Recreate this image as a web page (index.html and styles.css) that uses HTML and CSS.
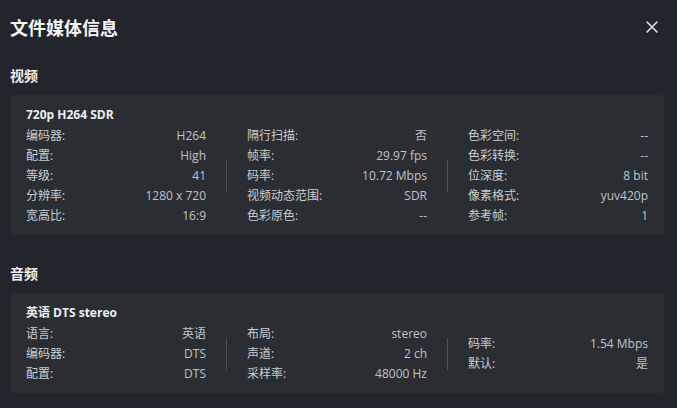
FILE: index.html
```html
<!DOCTYPE html>
<html lang="zh-CN">
<head>
  <meta charset="UTF-8">
  <meta name="viewport" content="width=device-width, initial-scale=1.0">
  <title>文件媒体信息</title>
  <link rel="stylesheet" href="styles.css">
</head>
<body>

  <div class="dialog">
    <div class="dialog-header">
      <span class="dialog-title">文件媒体信息</span>
      <button class="close-btn" aria-label="关闭">
        <svg width="12" height="12" viewBox="0 0 12 12">
          <path d="M1 1 L11 11 M11 1 L1 11" stroke="#dfe2e6" stroke-width="1.6" stroke-linecap="round"/>
        </svg>
      </button>
    </div>

    <!-- 视频 -->
    <div class="section-title">视频</div>
    <div class="card">
      <div class="card-title">720p H264 SDR</div>
      <div class="columns">
        <div class="col">
          <div class="row"><span>编码器:</span><span>H264</span></div>
          <div class="row"><span>配置:</span><span>High</span></div>
          <div class="row"><span>等级:</span><span>41</span></div>
          <div class="row"><span>分辨率:</span><span>1280 x 720</span></div>
          <div class="row"><span>宽高比:</span><span>16:9</span></div>
        </div>
        <div class="sep"></div>
        <div class="col">
          <div class="row"><span>隔行扫描:</span><span>否</span></div>
          <div class="row"><span>帧率:</span><span>29.97 fps</span></div>
          <div class="row"><span>码率:</span><span>10.72 Mbps</span></div>
          <div class="row"><span>视频动态范围:</span><span>SDR</span></div>
          <div class="row"><span>色彩原色:</span><span>--</span></div>
        </div>
        <div class="sep"></div>
        <div class="col">
          <div class="row"><span>色彩空间:</span><span>--</span></div>
          <div class="row"><span>色彩转换:</span><span>--</span></div>
          <div class="row"><span>位深度:</span><span>8 bit</span></div>
          <div class="row"><span>像素格式:</span><span>yuv420p</span></div>
          <div class="row"><span>参考帧:</span><span>1</span></div>
        </div>
      </div>
    </div>

    <!-- 音频 -->
    <div class="section-title audio">音频</div>
    <div class="card">
      <div class="card-title">英语 DTS stereo</div>
      <div class="columns">
        <div class="col">
          <div class="row"><span>语言:</span><span>英语</span></div>
          <div class="row"><span>编码器:</span><span>DTS</span></div>
          <div class="row"><span>配置:</span><span>DTS</span></div>
        </div>
        <div class="sep"></div>
        <div class="col">
          <div class="row"><span>布局:</span><span>stereo</span></div>
          <div class="row"><span>声道:</span><span>2 ch</span></div>
          <div class="row"><span>采样率:</span><span>48000 Hz</span></div>
        </div>
        <div class="sep"></div>
        <div class="col">
          <div class="row"><span>码率:</span><span>1.54 Mbps</span></div>
          <div class="row"><span>默认:</span><span>是</span></div>
        </div>
      </div>
    </div>
  </div>

</body>
</html>
```

FILE: styles.css
```css
body {
  margin: 0;
  background: #22252b;
  font-family: 'Open Sans', 'Noto Sans CJK SC', sans-serif;
  color: #c6cacf;
}

.dialog {
  width: 654px;
  padding: 1px 13px 0 10px;
}

.dialog-header {
  height: 52px;
  display: flex;
  align-items: center;
  justify-content: space-between;
}

.dialog-title {
  font-size: 18px;
  font-weight: bold;
  color: #f2f3f5;
}

.close-btn {
  background: none;
  border: none;
  padding: 0;
  width: 14px;
  height: 14px;
  margin-right: 5px;
  display: flex;
  align-items: center;
  justify-content: center;
  cursor: pointer;
}

.section-title {
  margin-top: 13px;
  height: 20px;
  line-height: 20px;
  font-size: 14px;
  font-weight: bold;
  color: #eceef0;
  margin-bottom: 9px;
}

.section-title.audio {
  margin-top: 29px;
}

.card {
  background: #2a2e33;
  border-radius: 4px;
  padding: 10px 16px;
}

.card-title {
  height: 20px;
  line-height: 20px;
  font-size: 12px;
  font-weight: bold;
  color: #eceef0;
}

.columns {
  display: flex;
  align-items: center;
  padding-top: 1px;
  margin-bottom: -1px;
}

.col {
  width: 180px;
  flex-shrink: 0;
}

.row {
  display: flex;
  justify-content: space-between;
  height: 20px;
  line-height: 20px;
  font-size: 12px;
}

.row span:first-child {
  color: #c9cdd1;
}

.row span:last-child {
  color: #bfc3c8;
}

.sep {
  width: 1px;
  height: 32px;
  background: #4a4f55;
  margin: 0 20px;
  flex-shrink: 0;
}
```
